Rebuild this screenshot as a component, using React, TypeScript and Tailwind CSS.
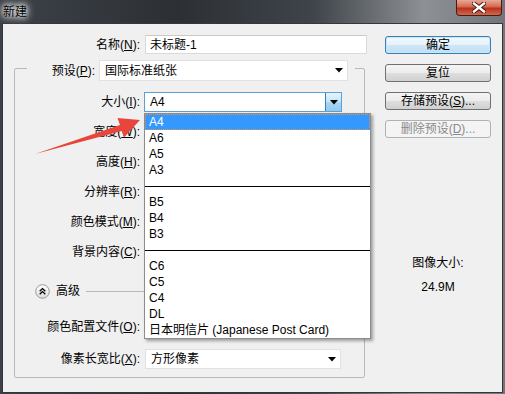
import React from "react";

function Tri({ className = "" }: { className?: string }) {
  return (
    <svg width="8" height="5" viewBox="0 0 8 5" className={className}>
      <path d="M0 0H8L4 4.5Z" fill="#000" />
    </svg>
  );
}

function Btn({
  children,
  primary,
  disabled,
}: {
  children: React.ReactNode;
  primary?: boolean;
  disabled?: boolean;
}) {
  let cls =
    "h-[18px] w-[106px] rounded-[3px] border flex items-center justify-center text-[12px] leading-[16px] ";
  if (disabled) cls += "border-[#adb2b5] bg-[#f4f4f4] text-[#8a8a8a]";
  else if (primary)
    cls +=
      "border-[#3c7fb1] bg-[linear-gradient(180deg,#f4fafe_0%,#e3f1fb_50%,#cfe7f7_52%,#bfdff4_100%)] shadow-[inset_0_0_0_1px_#c8e6fa]";
  else
    cls +=
      "border-[#707070] bg-[linear-gradient(180deg,#f4f4f4_0%,#ececec_50%,#dedede_52%,#d0d0d0_100%)]";
  return <div className={cls}>{children}</div>;
}

function Label({ w, children }: { w: string; children: React.ReactNode }) {
  return <div className={`${w} text-right whitespace-nowrap`}>{children}</div>;
}

const U = ({ c }: { c: string }) => <span className="underline underline-offset-[1px]">{c}</span>;

export default function App() {
  const items: (string | null)[] = [
    "A4",
    "A6",
    "A5",
    "A3",
    null,
    "B5",
    "B4",
    "B3",
    null,
    "C6",
    "C5",
    "C4",
    "DL",
    "日本明信片 (Japanese Post Card)",
  ];
  return (
    <div className="relative w-[505px] h-[394px] overflow-hidden bg-[linear-gradient(90deg,#3d4248_0%,#2c3035_35%,#3f444a_62%,#8d9195_84%,#72767b_100%)] [font-family:'Liberation_Sans','Noto_Sans_CJK_SC',sans-serif] text-[12px] leading-[16px] text-black">
      {/* title bar */}
      <div className="flex h-[23px] items-start justify-between">
        <div className="pl-[3px] pt-[4px] text-black [text-shadow:0_0_5px_#fff,0_0_8px_#fff,0_0_10px_#fff]">
          新建
        </div>
        <div className="mr-[3px] w-[46px] h-[16px] rounded-b-[4px] border border-t-0 border-[#4a1a12] bg-[linear-gradient(180deg,#e9a898_0%,#d4684f_45%,#b9301a_55%,#cf6a52_100%)] flex items-center justify-center">
          <svg width="14" height="11" viewBox="0 0 14 11">
            <path
              d="M2 1.5L12 9.5M12 1.5L2 9.5"
              stroke="#3a1008"
              strokeWidth="4.2"
              strokeLinecap="square"
            />
            <path
              d="M2 1.5L12 9.5M12 1.5L2 9.5"
              stroke="#ffffff"
              strokeWidth="2.4"
              strokeLinecap="square"
            />
          </svg>
        </div>
      </div>

      {/* panel */}
      <div className="ml-[2px] w-[501px] h-[370px] border border-[#34383d] bg-[#f0f0f0] flex">
        {/* left column */}
        <div className="w-[382px] flex flex-col">
          <div className="mt-[11px] flex items-center h-[19px]">
            <Label w="w-[137px]">
              名称(<U c="N" />):
            </Label>
            <div className="ml-[5px] w-[222px] h-[19px] border border-[#dadada] border-t-[#c9c9c9] bg-white pl-[4px] flex items-center">
              未标题-1
            </div>
          </div>

          {/* group box */}
          <div className="ml-[11px] mt-[14px] w-[351px] h-[310px] border border-[#b9b9b9] rounded-[2px] flex flex-col">
            <div className="-mt-[9px] ml-[12px] w-fit pr-[7px] h-[21px] bg-[#f0f0f0] flex items-center">
              <Label w="w-[68px]">
                预设(<U c="P" />):
              </Label>
              <div className="ml-[4px] w-[249px] h-[21px] border border-[#e1e1e1] bg-white flex items-center pl-[5px] pr-[4px] justify-between">
                <span>国际标准纸张</span>
                <Tri />
              </div>
            </div>

            <div className="mt-[11px] h-[20px] flex items-center">
              <Label w="w-[125px]">
                大小(<U c="I" />):
              </Label>
              <div className="ml-[4px] w-[198px] h-[20px] border border-[#5f9ed6] bg-white flex">
                <div className="flex-1 pl-[5px] flex items-center">A4</div>
                <div className="w-[16px] border-l border-[#3c7fb1] bg-[linear-gradient(180deg,#e6f4fc_0%,#c4e5f8_50%,#a8d6f3_52%,#8fcaee_100%)] flex items-center justify-center">
                  <Tri />
                </div>
              </div>
            </div>

            <div className="mt-[10px] h-[20px] flex items-center">
              <Label w="w-[125px]">
                宽度(<U c="W" />):
              </Label>
            </div>
            <div className="mt-[10px] h-[20px] flex items-center">
              <Label w="w-[125px]">
                高度(<U c="H" />):
              </Label>
            </div>
            <div className="mt-[10px] h-[20px] flex items-center">
              <Label w="w-[125px]">
                分辨率(<U c="R" />):
              </Label>
            </div>
            <div className="mt-[10px] h-[20px] flex items-center">
              <Label w="w-[125px]">
                颜色模式(<U c="M" />):
              </Label>
            </div>
            <div className="mt-[10px] h-[20px] flex items-center">
              <Label w="w-[125px]">
                背景内容(<U c="C" />):
              </Label>
            </div>

            <div className="mt-[19px] h-[20px] flex items-center">
              <div className="ml-[20px] w-[15px] h-[15px]">
                <svg width="15" height="15" viewBox="0 0 15 15">
                  <defs>
                    <linearGradient id="cg" x1="0" y1="0" x2="0" y2="1">
                      <stop offset="0" stopColor="#ffffff" />
                      <stop offset="1" stopColor="#dcdcdc" />
                    </linearGradient>
                  </defs>
                  <circle cx="7.5" cy="7.5" r="6.8" fill="url(#cg)" stroke="#9a9a9a" strokeWidth="1" />
                  <path d="M4.7 7.2L7.5 4.6L10.3 7.2" fill="none" stroke="#000" strokeWidth="1.4" />
                  <path d="M4.7 10.2L7.5 7.6L10.3 10.2" fill="none" stroke="#000" strokeWidth="1.4" />
                </svg>
              </div>
              <div className="ml-[6px]">高级</div>
              <div className="ml-[6px] mr-[8px] flex-1 h-px bg-[#b9b9b9]" />
            </div>

            <div className="mt-[16px] h-[20px] flex items-center">
              <Label w="w-[125px]">
                颜色配置文件(<U c="O" />):
              </Label>
            </div>

            <div className="mt-[12px] h-[20px] flex items-center">
              <Label w="w-[125px]">
                像素长宽比(<U c="X" />):
              </Label>
              <div className="ml-[5px] w-[196px] h-[20px] border border-[#e1e1e1] bg-white flex items-center pl-[5px] pr-[4px] justify-between">
                <span>方形像素</span>
                <Tri />
              </div>
            </div>
          </div>
        </div>

        {/* right column */}
        <div className="w-[106px] pt-[12px] flex flex-col">
          <div className="flex flex-col gap-[10px]">
            <Btn primary>确定</Btn>
            <Btn>复位</Btn>
            <Btn>
              存储预设(<U c="S" />)...
            </Btn>
            <Btn disabled>
              删除预设(<U c="D" />)...
            </Btn>
          </div>
          <div className="mt-[117px] text-center">图像大小:</div>
          <div className="mt-[8px] text-center">24.9M</div>
        </div>
      </div>

      {/* dropdown list */}
      <div className="absolute left-[144px] top-[113px] w-[227px] h-[226px] border border-[#8c8c8c] bg-white shadow-[2px_2px_3px_rgba(0,0,0,0.35)] flex flex-col">
        {items.map((it, i) =>
          it === null ? (
            <div key={i} className="h-[16px] flex items-center">
              <div className="w-full h-px bg-black" />
            </div>
          ) : (
            <div
              key={i}
              className={
                i === 0
                  ? "h-[16px] pl-[4px] bg-[#3399ff] text-white outline outline-1 outline-dotted outline-[#e8904a] -outline-offset-1 whitespace-nowrap"
                  : "h-[16px] pl-[4px] whitespace-nowrap"
              }
            >
              {it}
            </div>
          )
        )}
      </div>

      {/* red arrow */}
      <svg
        className="absolute left-0 top-0 pointer-events-none"
        width="505"
        height="394"
        viewBox="0 0 505 394"
      >
        <path
          d="M35 154 L120 125 L117.5 118 L140 120 L124 137.5 L121.8 131 Z"
          fill="#e8463a"
        />
      </svg>
    </div>
  );
}
